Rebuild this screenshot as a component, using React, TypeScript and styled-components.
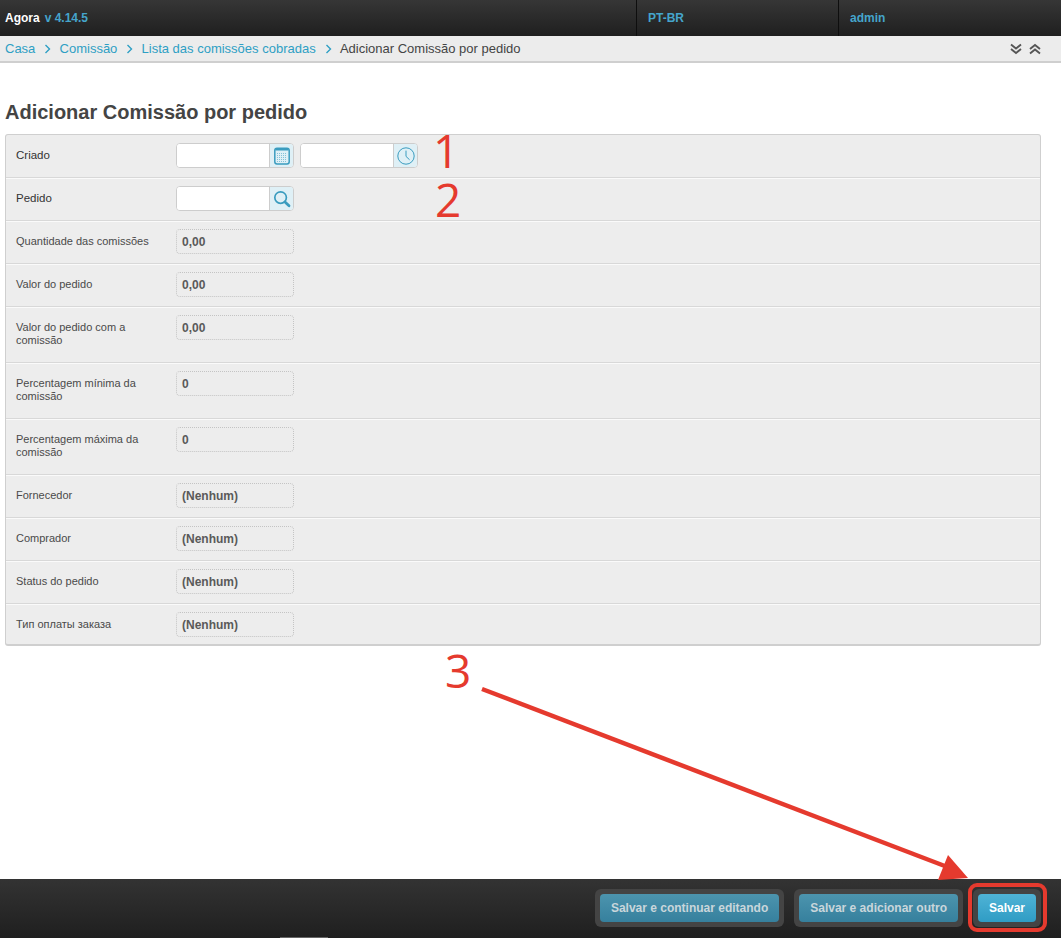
import React from "react";
import styled, { createGlobalStyle } from "styled-components";

const Global = createGlobalStyle`
  html, body { margin: 0; padding: 0; background: #fff; }
  body { font-family: "Liberation Sans", Arial, sans-serif; color: #444; }
  * { box-sizing: border-box; }
`;

const Page = styled.div`
  position: relative;
  width: 1061px;
  height: 938px;
  display: flex;
  flex-direction: column;
  overflow: hidden;
`;

const TopBar = styled.header`
  height: 36px;
  flex: none;
  display: flex;
  background: linear-gradient(#363636, #1f1f1f);
  font-size: 12px;
  font-weight: 700;
`;

const Brand = styled.div`
  width: 636px;
  padding-left: 5px;
  display: flex;
  align-items: center;
  gap: 5px;
  color: #fff;
`;

const Version = styled.span`
  color: #45a5cc;
`;

const TopCell = styled.div<{ $width: number }>`
  width: ${(p) => p.$width}px;
  border-left: 1px solid #0e0e0e;
  padding-left: 11px;
  display: flex;
  align-items: center;
  color: #45a5cc;
`;

const Crumbs = styled.nav`
  height: 27px;
  flex: none;
  display: flex;
  align-items: center;
  padding: 0 20px 0 5px;
  background: #ececec;
  border-bottom: 2px solid #cfcfcf;
  font-size: 13px;
`;

const Crumb = styled.a`
  color: #2e9fc4;
`;

const CrumbCurrent = styled.span`
  color: #444;
`;

const CrumbSep = styled.svg`
  width: 7px;
  height: 10px;
  margin: 1px 8.2px 0 9px;
  fill: none;
  stroke: #2e9fc4;
  stroke-width: 1.4;
`;

const CrumbTools = styled.div`
  margin-left: auto;
  display: flex;
  gap: 7px;
`;

const ToolIcon = styled.svg`
  width: 12px;
  height: 12px;
  fill: none;
  stroke: #555;
  stroke-width: 1.9;
`;

const Main = styled.main`
  flex: 1;
  padding: 36px 20px 0 5px;
`;

const Title = styled.h1`
  margin: 0 0 9px;
  height: 26px;
  line-height: 26px;
  font-size: 20px;
  font-weight: 700;
  color: #444;
`;

const Panel = styled.section`
  background: #ededed;
  border: 1px solid #cfcfcf;
  border-bottom-width: 2px;
  border-radius: 3px;
`;

const Row = styled.div<{ $tall?: boolean }>`
  height: ${(p) => (p.$tall ? 56 : 43)}px;
  padding: 8px 10px 0;
  display: flex;
  border-bottom: 1px solid #d8d8d8;
  box-shadow: 0 1px 0 #fafafa;
  &:last-child { border-bottom: 0; box-shadow: none; height: 40px; }
`;

const Label = styled.label<{ $strong?: boolean }>`
  width: 160px;
  flex: none;
  padding: 6px 10px 0 0;
  font-size: ${(p) => (p.$strong ? 11.5 : 11)}px;
  line-height: 13px;
  color: ${(p) => (p.$strong ? "#333" : "#4a4a4a")};
`;

const Fields = styled.div`
  display: flex;
  gap: 6px;
`;

const InputGroup = styled.div`
  width: 118px;
  height: 25px;
  display: flex;
  border: 1px solid #cdcdcd;
  border-radius: 4px;
  background: #fff;
  overflow: hidden;
`;

const TextInput = styled.input`
  flex: 1;
  min-width: 0;
  border: 0;
  outline: 0;
  background: #fff;
`;

const Addon = styled.div`
  width: 24px;
  flex: none;
  display: flex;
  align-items: center;
  justify-content: center;
  background: #dff0f6;
  border-left: 1px solid #cdcdcd;
`;

const AddonIcon = styled.svg`
  width: 18px;
  height: 18px;
  fill: none;
  stroke: #3a9cbf;
`;

const ReadOnly = styled.div`
  width: 118px;
  height: 25px;
  padding-left: 5px;
  display: flex;
  align-items: center;
  border: 1px dotted #c4c4c4;
  border-radius: 4px;
  font-size: 12px;
  font-weight: 700;
  color: #5a5a5a;
`;

const Footer = styled.footer`
  position: relative;
  height: 59px;
  flex: none;
  display: flex;
  justify-content: flex-end;
  align-items: flex-start;
  gap: 10px;
  padding: 10px 20px 0 0;
  background: linear-gradient(#333, #1f1f1f);
`;

const FooterEdge = styled.div`
  position: absolute;
  left: 280px;
  bottom: 0;
  width: 48px;
  height: 1px;
  background: #666;
`;

const ButtonRing = styled.div`
  padding: 5px;
  background: #444;
  border-radius: 6px;
`;

const SaveButton = styled.button<{ $primary?: boolean }>`
  height: 28px;
  padding: 0 11px;
  border: 0;
  border-radius: 4px;
  font-family: inherit;
  font-size: 12px;
  font-weight: 700;
  color: ${(p) => (p.$primary ? "#fff" : "#c9d6db")};
  background: ${(p) =>
    p.$primary
      ? "linear-gradient(#4fb3d6, #2f9cc4)"
      : "linear-gradient(#4c94ae, #36809d)"};
`;

const Digit = styled.span<{ $x: number; $y: number }>`
  position: absolute;
  left: ${(p) => p.$x}px;
  top: ${(p) => p.$y}px;
  font-family: "Open Sans", "Liberation Sans", sans-serif;
  font-size: 46px;
  line-height: 34px;
  height: 34px;
  color: #e53a2e;
  pointer-events: none;
`;

const Overlay = styled.svg`
  position: absolute;
  left: 0;
  top: 0;
  width: 1061px;
  height: 938px;
  pointer-events: none;
`;

const Calendar = () => (
  <AddonIcon viewBox="0 0 18 18">
    <rect x="1.8" y="1.3" width="14.4" height="15.6" rx="2.2" strokeWidth="1.5" />
    <path d="M2.5 2.8h13" strokeWidth="1.6" />
    <path d="M4 6.5h10M4 8.5h10M4 10.5h10M4 12.5h10M4 14.5h10" strokeWidth="1" strokeDasharray="1 1" opacity="0.55" />
  </AddonIcon>
);

const Clock = () => (
  <AddonIcon viewBox="0 0 18 18">
    <circle cx="9" cy="9" r="8.2" strokeWidth="1" />
    <path d="M9 3.6V9.4L12.6 12.8" strokeWidth="1" />
  </AddonIcon>
);

const Search = () => (
  <AddonIcon viewBox="0 0 18 18">
    <circle cx="7.6" cy="7.6" r="5.8" strokeWidth="1.7" />
    <path d="M12 12l4 3.8" strokeWidth="2.8" strokeLinecap="round" />
  </AddonIcon>
);

const Sep = () => (
  <CrumbSep viewBox="0 0 7 10">
    <path d="M1.5 1l4 4-4 4" />
  </CrumbSep>
);

const readOnlyRows: { label: string; value: string; tall?: boolean }[] = [
  { label: "Quantidade das comissões", value: "0,00" },
  { label: "Valor do pedido", value: "0,00" },
  { label: "Valor do pedido com a comissão", value: "0,00", tall: true },
  { label: "Percentagem mínima da comissão", value: "0", tall: true },
  { label: "Percentagem máxima da comissão", value: "0", tall: true },
  { label: "Fornecedor", value: "(Nenhum)" },
  { label: "Comprador", value: "(Nenhum)" },
  { label: "Status do pedido", value: "(Nenhum)" },
  { label: "Тип оплаты заказа", value: "(Nenhum)" },
];

export default function App() {
  return (
    <Page>
      <Global />
      <TopBar>
        <Brand>
          Agora <Version>v 4.14.5</Version>
        </Brand>
        <TopCell $width={202}>PT-BR</TopCell>
        <TopCell $width={223}>admin</TopCell>
      </TopBar>
      <Crumbs>
        <Crumb>Casa</Crumb>
        <Sep />
        <Crumb>Comissão</Crumb>
        <Sep />
        <Crumb>Lista das comissões cobradas</Crumb>
        <Sep />
        <CrumbCurrent>Adicionar Comissão por pedido</CrumbCurrent>
        <CrumbTools>
          <ToolIcon viewBox="0 0 12 12">
            <path d="M1 1.5L6 5.5l5-4M1 6L6 10l5-4" />
          </ToolIcon>
          <ToolIcon viewBox="0 0 12 12">
            <path d="M1 6L6 2l5 4M1 10.5L6 6.5l5 4" />
          </ToolIcon>
        </CrumbTools>
      </Crumbs>
      <Main>
        <Title>Adicionar Comissão por pedido</Title>
        <Panel>
          <Row>
            <Label $strong>Criado</Label>
            <Fields>
              <InputGroup>
                <TextInput />
                <Addon><Calendar /></Addon>
              </InputGroup>
              <InputGroup>
                <TextInput />
                <Addon><Clock /></Addon>
              </InputGroup>
            </Fields>
          </Row>
          <Row>
            <Label $strong>Pedido</Label>
            <InputGroup>
              <TextInput />
              <Addon><Search /></Addon>
            </InputGroup>
          </Row>
          {readOnlyRows.map((r, i) => (
            <Row key={i} $tall={r.tall}>
              <Label>{r.label}</Label>
              <ReadOnly>{r.value}</ReadOnly>
            </Row>
          ))}
        </Panel>
      </Main>
      <Footer>
        <FooterEdge />
        <ButtonRing>
          <SaveButton>Salvar e continuar editando</SaveButton>
        </ButtonRing>
        <ButtonRing>
          <SaveButton>Salvar e adicionar outro</SaveButton>
        </ButtonRing>
        <ButtonRing>
          <SaveButton $primary>Salvar</SaveButton>
        </ButtonRing>
      </Footer>
      <Digit $x={433} $y={133}>1</Digit>
      <Digit $x={435} $y={182}>2</Digit>
      <Digit $x={445} $y={653}>3</Digit>
      <Overlay viewBox="0 0 1061 938">
        <path d="M482 689L950 868" stroke="#e53a2e" strokeWidth="4.5" fill="none" />
        <path d="M968 878L948 855L938 880Z" fill="#e53a2e" />
        <rect x="970" y="885" width="75" height="45" rx="7" fill="none" stroke="#e53a2e" strokeWidth="4" />
      </Overlay>
    </Page>
  );
}
